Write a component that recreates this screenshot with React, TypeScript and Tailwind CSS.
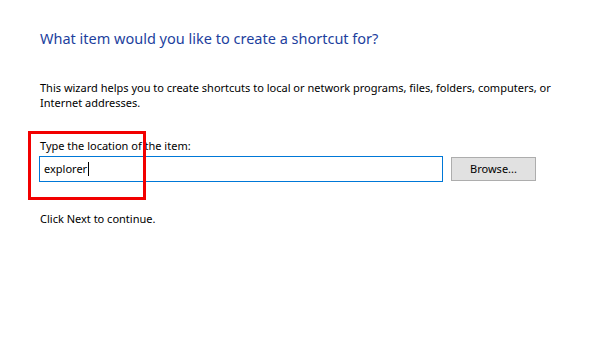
export default function App() {
  return (
    <div className="relative h-[340px] w-[600px] overflow-hidden bg-white font-['Noto_Sans',sans-serif] text-black">
      <div className="flex flex-col pl-[40px] pt-[28px]">
        <h1 className="text-[14.5px] leading-[20px] text-[#1d3f9e]">
          What item would you like to create a shortcut for?
        </h1>

        <p className="mt-[32px] w-[530px] text-[11px] leading-[15px]">
          This wizard helps you to create shortcuts to local or network programs, files, folders, computers, or
          Internet addresses.
        </p>

        <label className="mt-[28px] text-[11px] leading-[15px]">Type the location of the item:</label>

        <div className="mt-[3px] flex items-center">
          <div className="-ml-[1px] flex h-[26px] w-[404px] items-center border border-[#0078d7] px-[4px] text-[11px]">
            explorer
            <span className="ml-[1px] h-[14px] w-[1px] bg-black" />
          </div>
          <button className="ml-[8px] h-[24px] w-[85px] border border-[#adadad] bg-[#e1e1e1] text-[11px]">
            Browse...
          </button>
        </div>

        <p className="mt-[29px] text-[11px] leading-[15px]">Click Next to continue.</p>
      </div>

      {/* annotation box */}
      <div className="absolute left-[28px] top-[131px] h-[69px] w-[118px] border-[3px] border-[#f20000]" />
    </div>
  );
}
